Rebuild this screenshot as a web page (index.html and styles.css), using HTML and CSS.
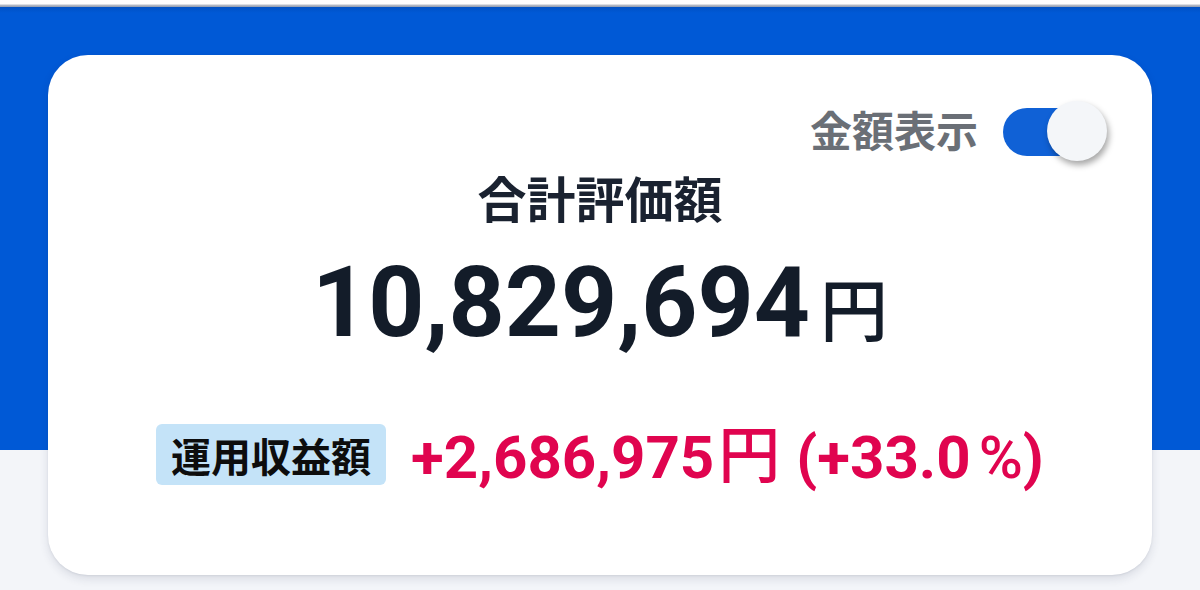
FILE: index.html
```html
<!DOCTYPE html>
<html lang="ja">
<head>
<meta charset="utf-8">
<link rel="stylesheet" href="styles.css">
</head>
<body>
<div class="topline"></div>
<main class="page">
  <section class="card">
    <div class="toggle-row">
      <span class="toggle-label">金額表示</span>
      <span class="toggle" role="switch" aria-checked="true">
        <span class="track"></span>
        <span class="knob"></span>
      </span>
    </div>
    <h1 class="title">合計評価額</h1>
    <div class="total"><span class="total-num">10,829,694</span><span class="total-yen">円</span></div>
    <div class="profit-row">
      <span class="badge">運用収益額</span>
      <span class="profit"><span class="num">+2,686,975</span><span class="yen">円</span><span class="pct">(+33.0<span class="pct-sign">%</span>)</span></span>
    </div>
  </section>
</main>
</body>
</html>
```
FILE: styles.css
```css
* { box-sizing: border-box; }
html, body { margin: 0; padding: 0; }
body {
  width: 1200px;
  height: 590px;
  overflow: hidden;
  background: #f3f5f9;
  font-family: "Roboto", "Noto Sans CJK JP", sans-serif;
}
.topline {
  height: 7px;
  background: linear-gradient(to bottom, #fdfdfe 0, #fdfdfe 4px, #b9bec8 5px, #8f9bb0 7px);
}
.page {
  height: 583px;
  background: linear-gradient(to bottom, #0050c4 0, #0059d6 6px, #0059d6 443px, #f3f5f9 443px);
  padding: 48px 48px 0;
}
.card {
  background: #ffffff;
  border-radius: 40px;
  height: 520px;
  padding: 44px 45px 0 45px;
  box-shadow: 0 4px 10px rgba(30, 40, 70, 0.12), 0 1px 2px rgba(30, 40, 70, 0.08);
  display: flex;
  flex-direction: column;
}
.toggle-row {
  display: flex;
  justify-content: flex-end;
  align-items: center;
  gap: 25px;
  height: 60px;
}
.toggle-label {
  font-family: "Noto Sans CJK JP", sans-serif;
  font-size: 42px;
  font-weight: 700;
  color: #6a6f76;
  line-height: 1;
}
.toggle {
  position: relative;
  width: 104px;
  height: 60px;
  display: block;
  margin-top: 4px;
}
.track {
  position: absolute;
  left: 0;
  top: 7px;
  width: 84px;
  height: 48px;
  border-radius: 24px;
  background: #1061d6;
}
.knob {
  position: absolute;
  right: 0;
  top: 0;
  width: 60px;
  height: 60px;
  border-radius: 50%;
  background: #f4f6f9;
  box-shadow: 2px 4px 6px rgba(0, 0, 0, 0.35);
}
.title {
  margin: 8px 0 0;
  text-align: center;
  font-family: "Noto Sans CJK JP", sans-serif;
  font-size: 49px;
  font-weight: 700;
  color: #1a2230;
  line-height: 60px;
}
.total {
  margin-top: 26px;
  text-align: center;
  color: #131c29;
  line-height: 100px;
  height: 100px;
}
.total-num {
  font-size: 98px;
  font-weight: 700;
}
.total-yen {
  font-family: "Noto Sans CJK JP", sans-serif;
  font-size: 68px;
  font-weight: 500;
  margin-left: 10px;
}
.profit-row {
  margin-top: 66px;
  display: flex;
  justify-content: center;
  align-items: center;
  gap: 25px;
}
.badge {
  background: #c4e3f8;
  border-radius: 6px;
  height: 61px;
  padding: 0 15px;
  display: flex;
  align-items: center;
  font-family: "Noto Sans CJK JP", sans-serif;
  font-size: 40px;
  font-weight: 700;
  color: #0d0d0d;
}
.profit {
  color: #e0044f;
  font-weight: 700;
  font-size: 60px;
  line-height: 64px;
  white-space: nowrap;
}
.yen {
  font-family: "Noto Sans CJK JP", sans-serif;
  font-size: 62px;
  font-weight: 500;
  margin-left: 4px;
  margin-right: 16px;
}
.pct-sign {
  margin-left: 8px;
  font-weight: 500;
}
```
